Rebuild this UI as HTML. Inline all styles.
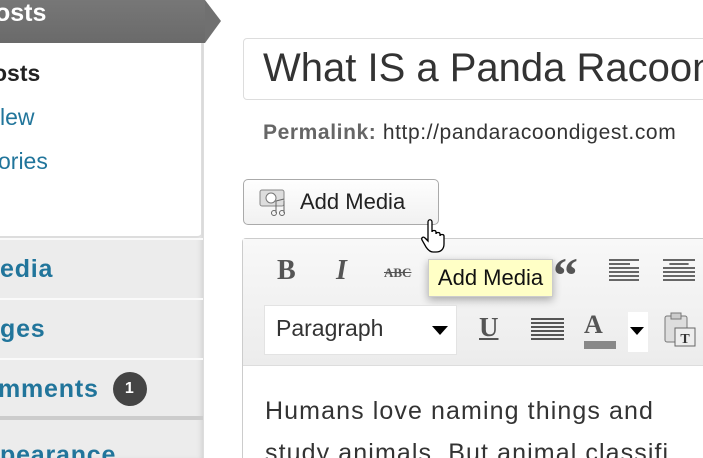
<!DOCTYPE html>
<html style="overflow:hidden;height:458px"><head><style>
body{margin:0;width:703px;height:458px;overflow:hidden;background:#fff;font-family:"Liberation Sans",sans-serif;position:relative}
.a{position:absolute}
.side{left:0;top:0;width:203px;height:458px;background:#ececec;border-right:1px solid #ddd;box-shadow:inset -4px 0 6px -3px #ccc}
.hd{left:0;top:0;width:205px;height:43px;background:linear-gradient(#777,#6a6a6a);color:#fff;font-weight:bold;font-size:25px;line-height:30px}
.tip{left:205px;top:0;width:0;height:0;border-top:21px solid transparent;border-bottom:22px solid transparent;border-left:16px solid #707070}
.sub{left:0;top:43px;width:201px;height:193px;background:#fff;border-bottom:2px solid #ddd;border-radius:0 0 4px 0}
.si{font-size:23px;left:0}
.mi{left:0;width:203px;height:58px;border-top:2px solid #fafafa;border-bottom:1px solid #d8d8d8;font-size:25px;font-weight:bold;color:#21759b;line-height:58px;white-space:nowrap;overflow:hidden;letter-spacing:.8px}
</style></head><body>
<div class="a side"></div>
<div class="a hd"><span style="position:relative;left:-5px;top:-2px">osts</span></div>
<div class="a tip"></div>
<div class="a sub"></div>
<div class="a si" style="top:60px;font-weight:bold;color:#222;left:-7px">osts</div>
<div class="a si" style="top:104px;color:#21759b">lew</div>
<div class="a si" style="top:148px;color:#21759b;left:-2px">ories</div>
<div class="a mi" style="top:238px">edia</div>
<div class="a mi" style="top:298px">ges</div>
<div class="a mi" style="top:358px;height:56px;border-bottom:4px solid #ccc"><span style="margin-left:-2px">mments</span><span style="display:inline-block;width:34px;height:34px;border-radius:17px;background:#444;color:#fff;font-size:16px;line-height:34px;text-align:center;vertical-align:4px;margin-left:14px">1</span></div>
<div class="a mi" style="top:429px;height:29px;border:none;line-height:52px">pearance</div>

<div class="a" style="left:243px;top:38px;width:480px;height:60px;border:1px solid #ddd;border-radius:4px"></div>
<div class="a" style="left:263px;top:46px;font-size:40px;color:#333;white-space:nowrap">What IS a Panda Racoon</div>
<div class="a" style="left:263px;top:121px;font-size:21px;color:#333;white-space:nowrap;letter-spacing:.6px"><b style="color:#666">Permalink:</b> http://pandaracoondigest.com</div>

<div class="a" style="left:243px;top:179px;width:194px;height:44px;border:1px solid #aaa;border-radius:5px;background:linear-gradient(#fefefe,#f1f1f1)"></div>
<svg class="a" style="left:258px;top:187px" width="34" height="30"><rect x="2" y="3" width="24" height="16" rx="2" fill="#ddd" stroke="#888"/><circle cx="13" cy="11" r="5" fill="#fff" stroke="#777"/><path d="M18 14v12M26 14v12M18 14l8-2" stroke="#666" fill="none"/><circle cx="16" cy="26" r="2.5" fill="none" stroke="#666"/><circle cx="24" cy="26" r="2.5" fill="none" stroke="#666"/></svg>
<div class="a" style="left:300px;top:189px;font-size:22px;color:#222">Add Media</div>

<div class="a" style="left:242px;top:238px;width:470px;height:219px;border:1px solid #ccc;border-bottom:none;border-radius:4px 4px 0 0;background:#fff"></div>
<div class="a" style="left:243px;top:239px;width:470px;height:126px;background:linear-gradient(#f8f8f8,#ececec);border-bottom:1px solid #ddd"></div>
<div class="a" style="left:277px;top:255px;font:bold 28px 'Liberation Serif',serif;color:#555">B</div>
<div class="a" style="left:336px;top:255px;font:italic bold 28px 'Liberation Serif',serif;color:#555">I</div>
<div class="a" style="left:384px;top:265px;font:bold 13px 'Liberation Serif',serif;color:#555;text-decoration:line-through">ABC</div>
<div class="a" style="left:553px;top:250px;font:bold 50px 'Liberation Serif',serif;color:#555;line-height:50px">“</div>
<div class="a" style="left:609px;top:259px;width:30px;height:22px;background:repeating-linear-gradient(#666 0 2px,transparent 2px 4px);clip-path:polygon(0 0,100% 0,100% 15%,70% 15%,70% 35%,100% 35%,100% 100%,0 100%)"></div>
<div class="a" style="left:663px;top:259px;width:32px;height:22px;background:repeating-linear-gradient(#666 0 2px,transparent 2px 4px);clip-path:polygon(0 0,100% 0,100% 15%,80% 15%,80% 35%,100% 35%,100% 100%,0 100%,0 35%,20% 35%,20% 15%,0 15%)"></div>
<div class="a" style="left:428px;top:259px;width:123px;height:36px;background:#ffffc6;border:1px solid #ccc;box-shadow:0 3px 8px rgba(0,0,0,.3);font-size:22px;line-height:36px;text-align:center;color:#111">Add Media</div>
<svg class="a" style="left:420px;top:218px" width="34" height="36"><path d="M8 4c0-3 4-3 4 0v10c0-2 4-2 4 0v2c0-2 4-2 4 0v2c0-2 4-2 4 0v8c0 5-3 8-8 8h-3c-3 0-5-2-7-5l-4-7c-1-2 1-4 3-2l3 3z" fill="#fff" stroke="#000" stroke-width="1.3"/></svg>
<div class="a" style="left:264px;top:305px;width:191px;height:48px;background:#fff;border:1px solid #e3e3e3"></div>
<div class="a" style="left:276px;top:315px;font-size:23px;color:#333">Paragraph</div>
<div class="a" style="left:432px;top:326px;border-left:8px solid transparent;border-right:8px solid transparent;border-top:9px solid #000"></div>
<div class="a" style="left:479px;top:312px;font:bold 27px 'Liberation Serif',serif;color:#555;text-decoration:underline">U</div>
<div class="a" style="left:531px;top:318px;width:33px;height:24px;background:repeating-linear-gradient(#555 0 2px,transparent 2px 4px)"></div>
<div class="a" style="left:584px;top:310px;font:bold 26px 'Liberation Serif',serif;color:#555">A</div>
<div class="a" style="left:584px;top:341px;width:32px;height:8px;background:#888"></div>
<div class="a" style="left:628px;top:312px;width:20px;height:40px;background:#fff"></div>
<div class="a" style="left:630px;top:327px;border-left:7px solid transparent;border-right:7px solid transparent;border-top:8px solid #000"></div>
<svg class="a" style="left:663px;top:312px" width="34" height="36"><rect x="2" y="4" width="22" height="26" rx="2" fill="#ddd" stroke="#777"/><rect x="8" y="1" width="10" height="6" fill="#ccc" stroke="#777"/><rect x="12" y="16" width="20" height="18" fill="#eee" stroke="#666"/><text x="22" y="31" font-family="Liberation Serif" font-weight="bold" font-size="14" text-anchor="middle" fill="#333">T</text></svg>
<div class="a" style="left:265px;top:390px;width:438px;height:68px;overflow:hidden;font-size:25px;color:#333;line-height:42px;white-space:nowrap;letter-spacing:1.1px">Humans love naming things and<br>study animals. But animal classifi</div>
</body></html>
